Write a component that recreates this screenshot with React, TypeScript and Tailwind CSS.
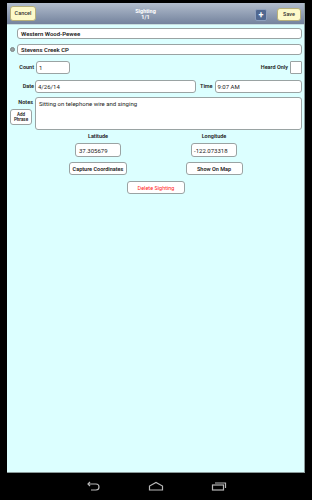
import React from "react";

const FONT = "font-['Roboto','Liberation_Sans',sans-serif]";

function Field({ text, className = "" }: { text: string; className?: string }) {
  return (
    <div
      className={`flex items-center bg-white border border-[#9aa3a3] rounded-[3px] px-[2px] text-[6px] text-[#222] ${className}`}
    >
      {text}
    </div>
  );
}

function Btn({ text, className = "" }: { text: string; className?: string }) {
  return (
    <div
      className={`flex items-center justify-center bg-white border border-[#9aa3a3] rounded-[3px] text-[5.5px] font-semibold text-[#222] ${className}`}
    >
      {text}
    </div>
  );
}

function Label({ text, className = "" }: { text: string; className?: string }) {
  return <span className={`text-[5.5px] font-semibold text-[#222] ${className}`}>{text}</span>;
}

export default function App() {
  return (
    <div className={`w-[312px] h-[500px] bg-black flex flex-col ${FONT}`}>
      {/* Panel */}
      <div className="mt-[3px] mx-[7px] h-[470px] flex flex-col bg-[#dcffff] border-r border-b border-[#8a9a9a]">
        {/* Header */}
        <div className="h-[22px] shrink-0 flex items-center px-[3px] bg-gradient-to-b from-[#b2bdcd] to-[#74839d] border-b border-[#c7dede]">
          <div className="w-[26px] h-[15px] flex items-center justify-center bg-[#fdf9c9] border border-[#b8b07a] rounded-[3px] text-[5.5px] font-medium text-[#333]">
            Cancel
          </div>
          <div className="flex-1 flex flex-col items-center leading-[6px] text-[5.5px] font-bold text-white">
            <span>Sighting</span>
            <span>1/1</span>
          </div>
          <div className="w-[12px] h-[12px] mt-[3px] flex items-center justify-center bg-[#506890] border border-[#8ea0bd] rounded-[2px] text-[9px] leading-none font-bold text-white">
            +
          </div>
          <div className="w-[24px] h-[13px] ml-[10px] mt-[1px] flex items-center justify-center bg-[#fdf9c9] border border-[#b8b07a] rounded-[3px] text-[5.5px] font-medium text-[#333]">
            Save
          </div>
        </div>

        {/* Body */}
        <div className="flex flex-col pl-[3px] pr-[2px]">
          <div className="mt-[3px] flex">
            <Field text="Western Wood-Pewee" className="ml-[7px] flex-1 h-[11px] pl-[3px] font-semibold text-[5.5px]" />
          </div>
          <div className="mt-[5px] flex items-center">
            <div className="w-[5px] h-[5px] rounded-full bg-[#9aa2a2] border border-[#7c8585]" />
            <Field text="Stevens Creek CP" className="ml-[2px] flex-1 h-[11px] pl-[3px] font-semibold text-[5.5px]" />
          </div>

          {/* Count / Heard only */}
          <div className="mt-[6px] flex items-center h-[13px]">
            <Label text="Count" className="w-[24px] text-right" />
            <Field text="1" className="ml-[2px] w-[34px] h-[13px]" />
            <div className="flex-1" />
            <Label text="Heard Only" />
            <div className="ml-[2px] w-[12px] h-[13px] bg-white border border-[#9aa3a3] rounded-[1px]" />
          </div>

          {/* Date / Time */}
          <div className="mt-[6px] flex items-center h-[13px]">
            <Label text="Date" className="w-[24px] text-right" />
            <Field text="4/26/14" className="ml-[1px] w-[161px] h-[13px]" />
            <Label text="Time" className="ml-[4px]" />
            <Field text="9:07 AM" className="ml-[2px] flex-1 h-[13px]" />
          </div>

          {/* Notes */}
          <div className="mt-[4px] flex">
            <div className="w-[25px] flex flex-col items-end">
              <Label text="Notes" className="mt-[1px] mr-[2px]" />
              <div className="mt-[3px] mr-[3px] w-[22px] h-[16px] flex flex-col items-center justify-center bg-white border border-[#9aa3a3] rounded-[3px] text-[4.5px] leading-[5px] font-semibold text-[#222]">
                <span>Add</span>
                <span>Phrase</span>
              </div>
            </div>
            <div className="flex-1 h-[33px] bg-white border border-[#9aa3a3] rounded-[3px] px-[3px] pt-[1px] text-[6px] text-[#222]">
              Sitting on telephone wire and singing
            </div>
          </div>

          {/* Coordinates */}
          <div className="mt-[2px] flex justify-center">
            <div className="w-[116px] flex flex-col items-center">
              <Label text="Latitude" />
              <Field text="37.305679" className="mt-[3px] w-[46px] h-[14px] pl-[3px]" />
              <Btn text="Capture Coordinates" className="mt-[5px] w-[58px] h-[13px]" />
            </div>
            <div className="w-[116px] flex flex-col items-center">
              <Label text="Longitude" />
              <Field text="-122.073318" className="mt-[3px] w-[46px] h-[14px]" />
              <Btn text="Show On Map" className="mt-[5px] w-[57px] h-[13px]" />
            </div>
          </div>

          <div className="mt-[6px] flex justify-center">
            <div className="w-[58px] h-[13px] flex items-center justify-center bg-white border border-[#9aa3a3] rounded-[3px] text-[5.5px] text-[#ff2020]">
              Delete Sighting
            </div>
          </div>
        </div>
      </div>

      {/* Nav bar */}
      <div className="flex-1 flex items-center justify-center gap-[47px] pb-[2px]">
        <svg width="16" height="10" viewBox="0 0 16 10" fill="none" stroke="#b8b8b8" strokeWidth="1.2">
          <path d="M3 3 H11 A3 3 0 0 1 11 9 H6" />
          <path d="M5 1 L3 3 L5 5" />
        </svg>
        <svg width="16" height="10" viewBox="0 0 16 10" fill="none" stroke="#b8b8b8" strokeWidth="1.2">
          <path d="M1.5 9 V5 L8 1.5 L14.5 5 V9 Z" />
        </svg>
        <svg width="16" height="10" viewBox="0 0 16 10" fill="none" stroke="#b8b8b8" strokeWidth="1.2">
          <rect x="1.5" y="4" width="11" height="5" />
          <path d="M4 2 H14.5 V7" />
        </svg>
      </div>
    </div>
  );
}
